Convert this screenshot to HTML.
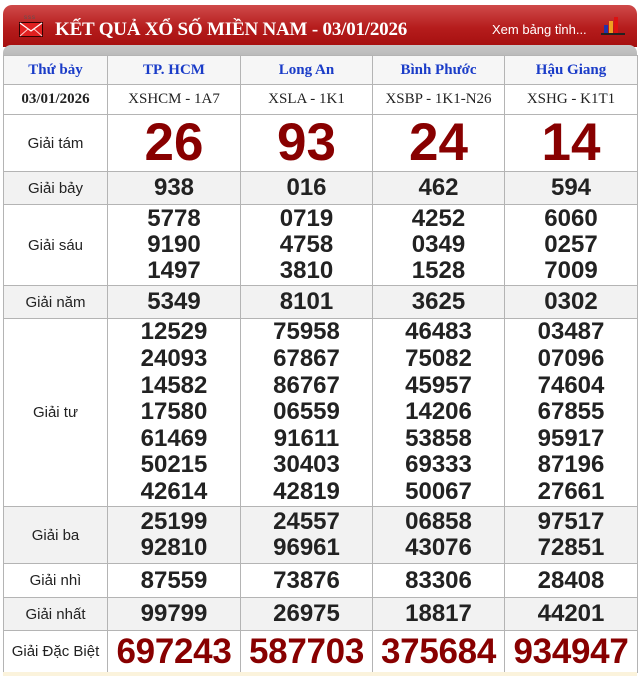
<!DOCTYPE html>
<html><head><meta charset="utf-8"><style>
*{margin:0;padding:0;box-sizing:border-box}
body{width:640px;height:676px;background:#fff;position:relative;overflow:hidden;font-family:"Liberation Sans",Arial,sans-serif}
.bar{position:absolute;left:3px;top:5px;width:634px;height:42px;border-radius:9px 9px 0 0;background:linear-gradient(#cf4a4a,#b51c1c 55%,#a50f0f)}
.gray{position:absolute;left:3px;top:45px;width:634px;height:11px;background:linear-gradient(#c8c8c8,#b9b9b9);border-radius:8px 8px 0 0}
.title{position:absolute;left:55px;top:19px;font-family:"Liberation Serif",serif;font-weight:bold;font-size:19px;color:#fff;letter-spacing:-0.2px}
.xem{position:absolute;left:492px;top:22px;font-size:13px;color:#fff}
.env{position:absolute;left:19px;top:22px;width:24px;height:15px;background:#e02020;border:1px solid #300}
.bot{position:absolute;left:3px;top:672px;width:634px;height:4px;background:#fbf3dc}
table{position:absolute;left:3px;top:55px;width:634px;border-collapse:collapse;table-layout:fixed}
td{border:1px solid #b4b4b4;text-align:center;vertical-align:middle;padding:0;overflow:hidden}
.h td{font-family:"Liberation Serif",serif;font-weight:bold;font-style:normal;color:#1a3cc8;font-size:15px;background:#f6f6f6}
.d td{font-family:"Liberation Serif",serif;font-size:15px;color:#222}
.n{font-weight:bold;font-size:24px;color:#222;line-height:26px}
.t{line-height:26.6px}
.l{font-size:15px;color:#222}
.g{background:#f2f2f2}
.big{font-weight:bold;font-size:53px;color:#800;line-height:50px}
.db{font-weight:bold;font-size:35px;color:#800;letter-spacing:-0.3px}
</style></head><body>
<div class="bar"></div>
<div class="env"><svg width="24" height="15" style="position:absolute;left:-1px;top:-1px"><path d="M1 1L12 9L23 1" stroke="#fff" stroke-width="1.3" fill="none"/><path d="M1 14L9 7M23 14L15 7" stroke="#fcc" fill="none"/></svg></div>
<div style="position:absolute;left:24px;top:15px;font-size:6px;color:#555;letter-spacing:1px">sss</div>
<div class="title">KẾT QUẢ XỔ SỐ MIỀN NAM - 03/01/2026</div>
<div class="xem">Xem bảng tỉnh...</div>
<svg style="position:absolute;left:600px;top:15px" width="26" height="20"><rect x="4" y="10" width="4" height="8" fill="#2233aa"/><rect x="9" y="6" width="4" height="12" fill="#f0a020"/><rect x="14" y="2" width="4" height="16" fill="#dd1111"/><rect x="1" y="18" width="24" height="2" fill="#222"/></svg>
<div class="gray"></div>
<table>
<colgroup><col style="width:104px"><col style="width:133px"><col style="width:132px"><col style="width:132px"><col style="width:133px"></colgroup>
<tr class="h" style="height:29px"><td>Thứ bảy</td><td>TP. HCM</td><td>Long An</td><td>Bình Phước</td><td>Hậu Giang</td></tr>
<tr class="d" style="height:30px"><td style="font-weight:bold">03/01/2026</td><td>XSHCM - 1A7</td><td>XSLA - 1K1</td><td>XSBP - 1K1-N26</td><td>XSHG - K1T1</td></tr>
<tr style="height:57px"><td class="l">Giải tám</td><td class="big">26</td><td class="big">93</td><td class="big">24</td><td class="big">14</td></tr>
<tr class="g" style="height:33px"><td class="l">Giải bảy</td><td class="n">938</td><td class="n">016</td><td class="n">462</td><td class="n">594</td></tr>
<tr style="height:81px"><td class="l">Giải sáu</td><td class="n">5778<br>9190<br>1497</td><td class="n">0719<br>4758<br>3810</td><td class="n">4252<br>0349<br>1528</td><td class="n">6060<br>0257<br>7009</td></tr>
<tr class="g" style="height:33px"><td class="l">Giải năm</td><td class="n">5349</td><td class="n">8101</td><td class="n">3625</td><td class="n">0302</td></tr>
<tr style="height:188px"><td class="l">Giải tư</td><td class="n t">12529<br>24093<br>14582<br>17580<br>61469<br>50215<br>42614</td><td class="n t">75958<br>67867<br>86767<br>06559<br>91611<br>30403<br>42819</td><td class="n t">46483<br>75082<br>45957<br>14206<br>53858<br>69333<br>50067</td><td class="n t">03487<br>07096<br>74604<br>67855<br>95917<br>87196<br>27661</td></tr>
<tr class="g" style="height:57px"><td class="l">Giải ba</td><td class="n">25199<br>92810</td><td class="n">24557<br>96961</td><td class="n">06858<br>43076</td><td class="n">97517<br>72851</td></tr>
<tr style="height:34px"><td class="l">Giải nhì</td><td class="n">87559</td><td class="n">73876</td><td class="n">83306</td><td class="n">28408</td></tr>
<tr class="g" style="height:33px"><td class="l">Giải nhất</td><td class="n">99799</td><td class="n">26975</td><td class="n">18817</td><td class="n">44201</td></tr>
<tr style="height:42px"><td class="l">Giải Đặc Biệt</td><td class="db">697243</td><td class="db">587703</td><td class="db">375684</td><td class="db">934947</td></tr>
</table>
<div class="bot"></div>
</body></html>
